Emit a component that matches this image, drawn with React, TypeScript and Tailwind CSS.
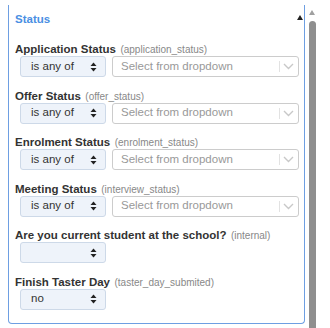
const font = { fontFamily: '"Liberation Sans", Arial, sans-serif' };

type Filter = {
  label: string;
  field: string;
  op?: string;
  multi: boolean;
};

const filters: Filter[] = [
  { label: 'Application Status', field: 'application_status', op: 'is any of', multi: true },
  { label: 'Offer Status', field: 'offer_status', op: 'is any of', multi: true },
  { label: 'Enrolment Status', field: 'enrolment_status', op: 'is any of', multi: true },
  { label: 'Meeting Status', field: 'interview_status', op: 'is any of', multi: true },
  { label: 'Are you current student at the school?', field: 'internal', op: '', multi: false },
  { label: 'Finish Taster Day', field: 'taster_day_submited', op: 'no', multi: false },
];

function UpDown() {
  return (
    <svg width="7" height="10" viewBox="0 0 7 10" className="shrink-0">
      <path d="M3.5 0.5 L6.5 4 L0.5 4 Z" fill="#222" />
      <path d="M3.5 9.5 L6.5 6 L0.5 6 Z" fill="#222" />
    </svg>
  );
}

function OpSelect({ value }: { value?: string }) {
  return (
    <div className="w-[86px] h-[21px] shrink-0 flex items-center justify-between pl-[10px] pr-[8px] rounded-[3px] border border-[#cdd9e8] bg-[#eef3fa] text-[11.5px] text-[#333]">
      <span>{value}</span>
      <UpDown />
    </div>
  );
}

function ValueSelect() {
  return (
    <div className="w-[187px] h-[21px] flex items-center justify-between pl-[8px] pr-[4px] rounded-[3px] border border-[#cccccc] bg-white text-[11.5px] text-[#999]">
      <span>Select from dropdown</span>
      <div className="flex items-center gap-[3px]">
        <div className="w-px h-[11px] bg-[#e2e2e2]" />
        <svg width="11" height="7" viewBox="0 0 11 7">
          <path d="M1 1 L5.5 5.5 L10 1" fill="none" stroke="#c8c8c8" strokeWidth="1.4" />
        </svg>
      </div>
    </div>
  );
}

export default function App() {
  return (
    <div className="w-[330px] h-[328px] bg-white overflow-hidden flex" style={font}>
      <div className="relative ml-[8px] mt-[5px] w-[297px] h-[319px] border-l border-r border-b border-[#6e9fe2] rounded-b-[4px] pl-[6px] pt-[5.5px]">
        <div className="absolute right-[1px] top-[10px] w-0 h-0 border-l-[3.5px] border-r-[3.5px] border-b-[5px] border-l-transparent border-r-transparent border-b-[#222]" />
        <div className="h-[17px] leading-[17px] text-[11.5px] font-bold text-[#4a8fe3]">Status</div>
        <div className="mt-[11.5px] flex flex-col gap-[8.5px]">
          {filters.map((f) => (
            <div key={f.field} className="flex flex-col">
              <div className="h-[17px] leading-[17px] whitespace-nowrap text-[#333]">
                <span className="text-[11.5px] font-bold">{f.label}</span>{' '}
                <span className="text-[10px] text-[#888]">({f.field})</span>
              </div>
              <div className="flex gap-[6px] pl-[5px]">
                <OpSelect value={f.op} />
                {f.multi && <ValueSelect />}
              </div>
            </div>
          ))}
        </div>
      </div>
      <div className="ml-[3px] w-[8px] flex flex-col items-center">
        <div className="mt-[10px] w-0 h-0 border-l-[3px] border-r-[3px] border-b-[5px] border-l-transparent border-r-transparent border-b-[#a0a0a0]" />
        <div className="mt-[6px] w-[7px] flex-1 rounded-t-full bg-[#8f8f8f]" />
      </div>
    </div>
  );
}
